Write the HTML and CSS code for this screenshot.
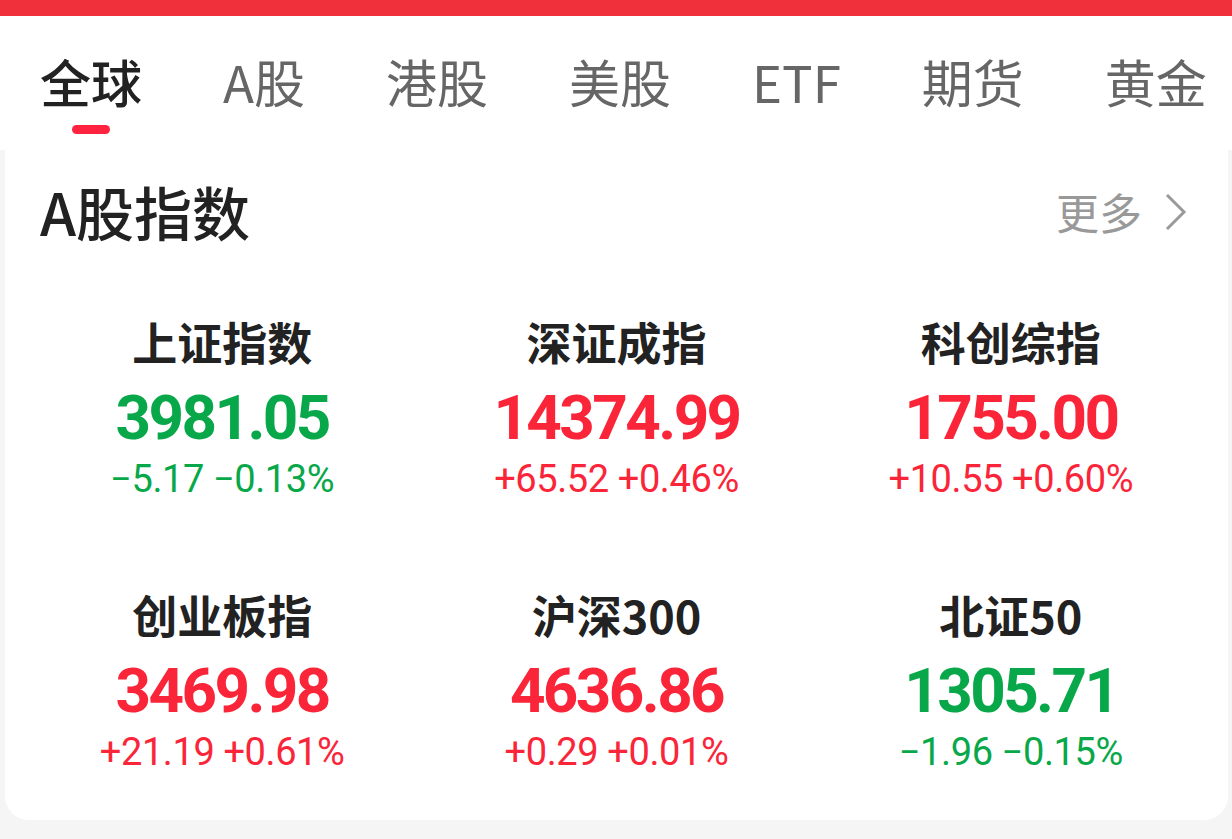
FILE: index.html
```html
<!DOCTYPE html>
<html lang="zh-CN">
<head>
<meta charset="utf-8">
<title>行情</title>
<link rel="stylesheet" href="styles.css">
</head>
<body>
<div class="topbar"></div>
<header class="tabs">
  <div class="tab active">全球</div>
  <div class="tab">A股</div>
  <div class="tab">港股</div>
  <div class="tab">美股</div>
  <div class="tab">ETF</div>
  <div class="tab">期货</div>
  <div class="tab">黄金</div>
</header>
<main class="page">
  <section class="card">
    <div class="card-head">
      <h2 class="card-title">A股指数</h2>
      <a class="more">更多
        <svg class="chev" width="24" height="38" viewBox="0 0 24 38"><path d="M3 2 L20 19 L3 36" fill="none" stroke="#9a9a9a" stroke-width="3"/></svg>
      </a>
    </div>
    <div class="grid">
      <div class="cell">
        <div class="name">上证指数</div>
        <div class="value down">3981.05</div>
        <div class="change down">−5.17 −0.13%</div>
      </div>
      <div class="cell">
        <div class="name">深证成指</div>
        <div class="value up">14374.99</div>
        <div class="change up">+65.52 +0.46%</div>
      </div>
      <div class="cell">
        <div class="name">科创综指</div>
        <div class="value up">1755.00</div>
        <div class="change up">+10.55 +0.60%</div>
      </div>
      <div class="cell">
        <div class="name">创业板指</div>
        <div class="value up">3469.98</div>
        <div class="change up">+21.19 +0.61%</div>
      </div>
      <div class="cell">
        <div class="name">沪深300</div>
        <div class="value up">4636.86</div>
        <div class="change up">+0.29 +0.01%</div>
      </div>
      <div class="cell">
        <div class="name">北证50</div>
        <div class="value down">1305.71</div>
        <div class="change down">−1.96 −0.15%</div>
      </div>
    </div>
  </section>
</main>
</body>
</html>
```
FILE: styles.css
```css
* { box-sizing: border-box; }

html, body {
  margin: 0;
  padding: 0;
  background: #f5f5f5;
  font-family: "Noto Sans CJK SC", "Noto Sans", sans-serif;
  height: 839px;
  overflow: hidden;
}

.topbar {
  height: 16px;
  background: #f0303a;
}

.tabs {
  background: #fff;
  height: 134px;
  display: flex;
  gap: 81px;
  padding: 35px 0 0 40px;
  white-space: nowrap;
}

.tab {
  position: relative;
  font-size: 51px;
  line-height: 60px;
  color: #666;
}
.tab.active {
  color: #222;
  font-weight: 500;
}
.tab.active::after {
  content: "";
  position: absolute;
  left: 50%;
  top: 74px;
  width: 38px;
  height: 9px;
  margin-left: -19px;
  border-radius: 5px;
  background: #ff2340;
}

.page {
  padding: 0 4px 0 5px;
}

.card {
  background: #fff;
  border-radius: 0 0 24px 24px;
  height: 670px;
  padding-top: 26px;
}

.card-head {
  display: flex;
  justify-content: space-between;
  align-items: center;
  padding: 0 40px 0 35px;
}

.card-title {
  margin: 0;
  font-size: 58px;
  line-height: 70px;
  font-weight: 500;
  color: #222;
}

.more {
  display: flex;
  align-items: center;
  gap: 22px;
  font-size: 43px;
  color: #999;
  line-height: 60px;
}
.chev { display: block; margin-top: 2px; }

.grid {
  display: grid;
  grid-template-columns: repeat(3, 1fr);
  row-gap: 84px;
  padding: 0 20px;
  margin-top: 66px;
}

.cell {
  display: flex;
  flex-direction: column;
  align-items: center;
}

.name {
  font-size: 45px;
  line-height: 60px;
  font-weight: 700;
  color: #222;
}

.value {
  margin-top: 11px;
  font-family: Roboto, "Noto Sans", sans-serif;
  font-weight: 700;
  font-size: 62px;
  line-height: 70px;
  letter-spacing: -2.6px;
}

.change {
  margin-top: 4px;
  font-family: Roboto, "Noto Sans", sans-serif;
  font-size: 38px;
  line-height: 44px;
  letter-spacing: -0.4px;
}

.up { color: #fb2539; }
.down { color: #08a84a; }
```
